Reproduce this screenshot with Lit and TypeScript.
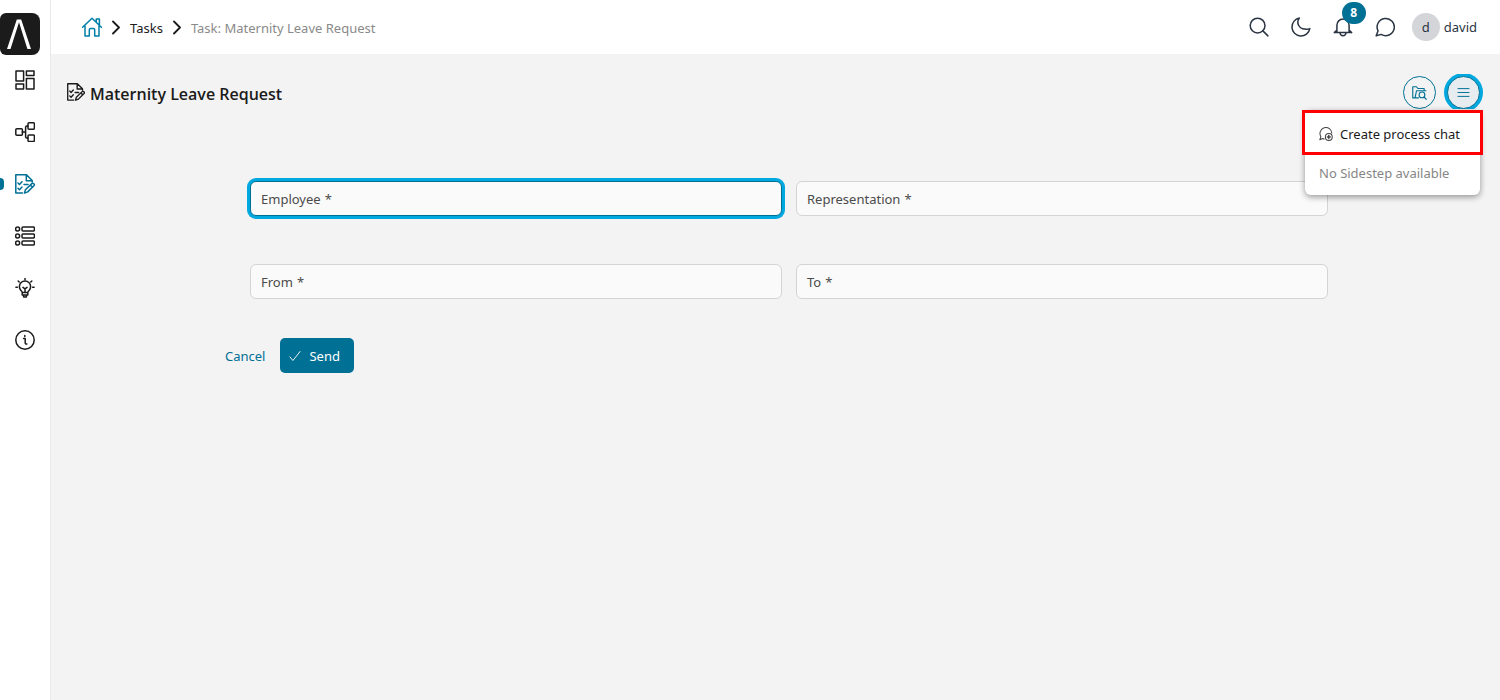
import { LitElement, html, css, svg } from "lit";
import { customElement } from "lit/decorators.js";
import { classMap } from "lit/directives/class-map.js";

const shapes = {
  dashboard: svg`<path d="M1 1h7.6v10H1zM11.4 1H19v4.6h-7.6zM11.4 8.5H19V19h-7.6zM1 14h7.6v5H1z"/>`,
  process: svg`<rect x="0.8" y="6.8" width="6.6" height="6.4" rx="1"/><rect x="13" y="0.8" width="6.4" height="6.4" rx="1"/><rect x="13" y="13" width="6.4" height="6.4" rx="1"/><path d="M7.4 10h3.2M13 4h-1.2q-1.2 0-1.2 1.2v9.6q0 1.2 1.2 1.2H13"/>`,
  task: svg`<path d="M7.5 19H.8V.8h10.7l5.7 5.7v1.4M11.3.8v5.9h5.9M3 9l1.5 1.5L7 7.7M3 14.3l1.5 1.5L7 13M9 10.6h4M16.8 9.6q1-.9 2 .1t.1 2l-6.2 6.2-3.2 1.2.9-3.3zM15.4 11l2.1 2.1"/>`,
  list: svg`<circle cx="2.6" cy="3" r="2"/><circle cx="2.6" cy="10" r="2"/><circle cx="2.6" cy="17" r="2"/><rect x="7" y="1" width="12.4" height="4" rx="1"/><rect x="7" y="8" width="12.4" height="4" rx="1"/><rect x="7" y="15" width="12.4" height="4" rx="1"/>`,
  bulb: svg`<path d="M7.2 14.6q0-1.2-1.4-2.3a5.6 5.6 0 1 1 8.4 0q-1.4 1.1-1.4 2.3zM7.2 14.6v2.4h5.6v-2.4M8.6 17.2v1.8h2.8v-1.8M10 13.8v-3L8 9.4M10 10.8l2-1.4M10 .6v1.2M3.2 3l1 1M16.8 3l-1 1M.9 9.3h1.5M17.6 9.3h1.5"/>`,
  info: svg`<circle cx="10" cy="10" r="9.2"/><path d="M8.6 8.5h1.6v4.3q0 1.5 1.7 1.1M9.8 5.4v1.2"/>`,
  home: svg`<path d="M.6 10.3 10 1.3l9.4 9M14.3 2.1h3.1v5.8M14.3 2.1v3M3 9v10h4.3v-6.2q0-1.2 1.2-1.2h3q1.2 0 1.2 1.2V19H17V9"/>`,
  chevron: svg`<path d="m1 1.5 6 6-6 6"/>`,
  search: svg`<circle cx="8.6" cy="8.6" r="7.4"/><path d="m13.9 13.9 5 5"/>`,
  moon: svg`<path d="M8.4 1.1a9 9 0 1 0 10.4 10.5 7 7 0 0 1-5 .4A6.7 6.7 0 0 1 8.4 1.1z"/>`,
  bell: svg`<path d="M1.3 15.6h17.4M3.9 15.4V8.2a6.1 6.1 0 0 1 12.2 0v7.2M1.3 15.6l2.4-2.2M18.7 15.6l-2.4-2.2M7 16q.4 2.7 3 2.7t3-2.7"/>`,
  chat: svg`<path d="M1.2 18.8 3 13.9a8.6 8.6 0 1 1 3.2 3.5z"/>`,
  folder: svg`<path d="M4 17.2H1V2.3h5l1.8 2.4h8.4v3M4 17.2 6 7.7h12.6M4 17.2h4.6"/><circle cx="13.3" cy="13.2" r="3.8"/><path d="m16 16 3 3"/>`,
  menu: svg`<path d="M1.5 4h17M1.5 10h17M1.5 16h17"/>`,
  newChat: svg`<path d="M7.3 17.3q-1-.2-1.9-.8L1.2 18.2l1.5-4.4A8.5 8.5 0 1 1 18.4 9"/><circle cx="14" cy="14.2" r="4.9"/><path d="M14 12.2v4M12 14.2h4" stroke-width="2.2"/>`,
  check: svg`<path d="m1.5 11.5 5 6L18.5 2.5"/>`,
};
type Icon = keyof typeof shapes;

const icon = (name: Icon, size = "") => html`<svg
  class="icon ${size}"
  viewBox=${name === "chevron" ? "0 0 8 15" : "0 0 20 20"}
  aria-hidden="true"
>${shapes[name]}</svg>`;

const nav: { icon: Icon; label: string; active?: boolean }[] = [
  { icon: "dashboard", label: "Dashboard" },
  { icon: "process", label: "Processes" },
  { icon: "task", label: "Tasks", active: true },
  { icon: "list", label: "Cases" },
  { icon: "bulb", label: "Ideas" },
  { icon: "info", label: "About" },
];

const fields = [
  { id: "employee", label: "Employee", focused: true },
  { id: "representation", label: "Representation" },
  { id: "from", label: "From" },
  { id: "to", label: "To" },
];

@customElement("app-root")
export class AppRoot extends LitElement {
  static styles = css`
    :host {
      display: flex;
      min-height: 100vh;
      background: #f3f3f3;
      color: #1b1b1b;
      font: 13px/20px "Noto Sans", "Open Sans", sans-serif;
    }
    * { box-sizing: border-box; }
    a { color: inherit; text-decoration: none; }
    button, input { font: inherit; color: inherit; margin: 0; padding: 0; }
    button { border: 0; background: none; cursor: pointer; }
    .icon {
      display: block;
      width: 20px;
      height: 20px;
      flex: none;
      fill: none;
      stroke: currentColor;
      stroke-width: 1.5;
      stroke-linejoin: round;
      stroke-linecap: round;
    }
    .icon.chevron { width: 8px; height: 15px; stroke-width: 1.8; }
    .icon.medium { width: 18px; height: 18px; }
    .icon.regular { width: 15px; height: 15px; }
    .icon.small { width: 14px; height: 14px; }
    .icon.tiny { width: 13px; height: 13px; }
    .icon.check { width: 12px; height: 12px; }
    .sidebar {
      flex: none;
      width: 51px;
      padding-top: 13px;
      background: #fff;
      border-right: 1px solid #e8e8e8;
    }
    .logo {
      display: block;
      width: 40px;
      height: 41px;
      border-radius: 6px 8px 8px 6px;
    }
    .logo svg {
      display: block;
      width: 40px;
      height: 42px;
      fill: #fff;
      background: #1b1b1b;
      border-radius: inherit;
    }
    .nav { display: grid; }
    .nav a { display: flex; align-items: center; justify-content: center; height: 52px; position: relative; }
    .nav a.active { color: #007095; }
    .nav a.active::before {
      content: "";
      position: absolute;
      left: 0;
      width: 4px;
      height: 12px;
      border-radius: 0 4px 4px 0;
      background: #007095;
    }
    .page { flex: 1; min-width: 0; }
    .topbar {
      display: flex;
      align-items: center;
      justify-content: space-between;
      height: 54px;
      padding: 0 23px 0 31px;
      background: #fff;
    }
    .crumbs { display: flex; align-items: center; gap: 10px; }
    .crumbs a, .crumbs .current { padding-top: 2px; }
    .crumbs a.home { padding: 0; color: #0080a8; }
    .crumbs .current { color: #8a8a8a; }
    .tools { display: flex; align-items: center; gap: 22px; color: #2b3442; }
    .tools button { position: relative; }
    .badge {
      position: absolute;
      left: 9px;
      bottom: 13px;
      min-width: 24px;
      height: 22px;
      border-radius: 11px;
      background: #007095;
      color: #fff;
      font-size: 12px;
      font-weight: 700;
      line-height: 22px;
    }
    .tools .user { display: flex; align-items: center; gap: 4px; margin-left: -5px; }
    .avatar { width: 28px; height: 28px; border-radius: 50%; background: #d4d5d9; line-height: 28px; }
    .head {
      position: relative;
      display: flex;
      align-items: center;
      justify-content: space-between;
      margin-top: 20px;
      padding: 0 17px 0 16px;
    }
    h1 { display: flex; align-items: center; gap: 5px; margin: 0; font: 600 16px/24px "Open Sans", "Noto Sans", sans-serif; }
    h1 span { padding-top: 4px; }
    .actions { display: flex; gap: 11px; padding: 2px 3px 0 0; overflow: clip; }
    .round {
      display: grid;
      place-items: center;
      width: 33px;
      height: 33px;
      border: 1px solid #007095;
      border-radius: 50%;
      color: #007095;
    }
    .round.focused { background: #e6ecf0; box-shadow: 0 0 0 3px #00a8e0; }
    .menu {
      position: absolute;
      top: 36px;
      right: 17px;
      width: 181px;
      margin: 0;
      padding: 0;
      list-style: none;
    }
    .menu::before {
      content: "";
      position: absolute;
      inset: 0 3px;
      background: #fff;
      border-radius: 6px;
      box-shadow: 0 2px 6px rgba(0, 0, 0, 0.4);
    }
    .menu li { position: relative; }
    .menu .marked { border: 3px solid #f00; background: #fff; }
    .menu button { display: flex; align-items: center; gap: 7px; width: 100%; height: 39px; padding: 3px 14px 0; }
    .menu .icon { color: #444; }
    .menu .none { padding: 8px 17px 12px; color: #868686; }
    form { padding: 72px 147px 0 174px; }
    .grid { display: grid; grid-template-columns: 1fr 1fr; gap: 48px 14px; padding: 0 25px; }
    .field { display: grid; align-items: center; }
    .field label, .field input { grid-area: 1 / 1; }
    .field label { z-index: 1; justify-self: start; padding-left: 11px; color: #4b4b4b; pointer-events: none; }
    .field span { padding-left: 4px; }
    .field input {
      width: 100%;
      height: 35px;
      padding: 0 11px;
      border: 1px solid #d4d4d4;
      border-radius: 6px;
      background: #fafafa;
      outline: 0;
    }
    .field.focused input { border-color: #007095; box-shadow: 0 0 0 3px #00a8e0; }
    .buttons { display: flex; gap: 15px; margin-top: 39px; }
    .cancel { color: #007095; }
    .send {
      display: flex;
      align-items: center;
      gap: 8px;
      height: 35px;
      padding: 0 14px 0 9px;
      border-radius: 5px;
      background: #007095;
      color: #fff;
    }
  `;

  render() {
    return html`
      <aside class="sidebar">
        <a class="logo" href="#" aria-label="Home">
          <svg viewBox="0 0 40 42" aria-hidden="true"><path d="M7 36 16.8 6.5h4.4L31 36h-3.6L19 9.2 10.5 36z"/></svg>
        </a>
        <nav class="nav" aria-label="Main">
          ${nav.map((n) => html`<a href="#" class=${classMap({ active: !!n.active })} aria-label=${n.label}>${icon(n.icon)}</a>`)}
        </nav>
      </aside>
      <div class="page">
        <header class="topbar">
          <nav class="crumbs" aria-label="Breadcrumb">
            <a class="home" href="#" aria-label="Home">${icon("home")}</a>
            ${icon("chevron", "chevron")}
            <a href="#">Tasks</a>
            ${icon("chevron", "chevron")}
            <span class="current">Task: Maternity Leave Request</span>
          </nav>
          <div class="tools">
            <button aria-label="Search">${icon("search")}</button>
            <button aria-label="Dark mode">${icon("moon")}</button>
            <button aria-label="Notifications">${icon("bell")}<span class="badge">8</span></button>
            <button aria-label="Chat">${icon("chat")}</button>
            <button class="user"><span class="avatar">d</span>david</button>
          </div>
        </header>
        <main>
          <div class="head">
            <h1>${icon("task", "medium")}<span>Maternity Leave Request</span></h1>
            <div class="actions">
              <button class="round" aria-label="Case details">${icon("folder", "regular")}</button>
              <button class="round focused" aria-label="More actions">${icon("menu", "tiny")}</button>
            </div>
            <ul class="menu">
              <li class="marked"><button>${icon("newChat", "small")}Create process chat</button></li>
              <li class="none">No Sidestep available</li>
            </ul>
          </div>
          <form>
            <div class="grid">
              ${fields.map((f) => html`<div class=${classMap({ field: true, focused: !!f.focused })}>
                <label for=${f.id}>${f.label}<span>*</span></label>
                <input id=${f.id} type="text" required />
              </div>`)}
            </div>
            <div class="buttons">
              <button type="button" class="cancel">Cancel</button>
              <button type="submit" class="send">${icon("check", "check")}Send</button>
            </div>
          </form>
        </main>
      </div>
    `;
  }
}
